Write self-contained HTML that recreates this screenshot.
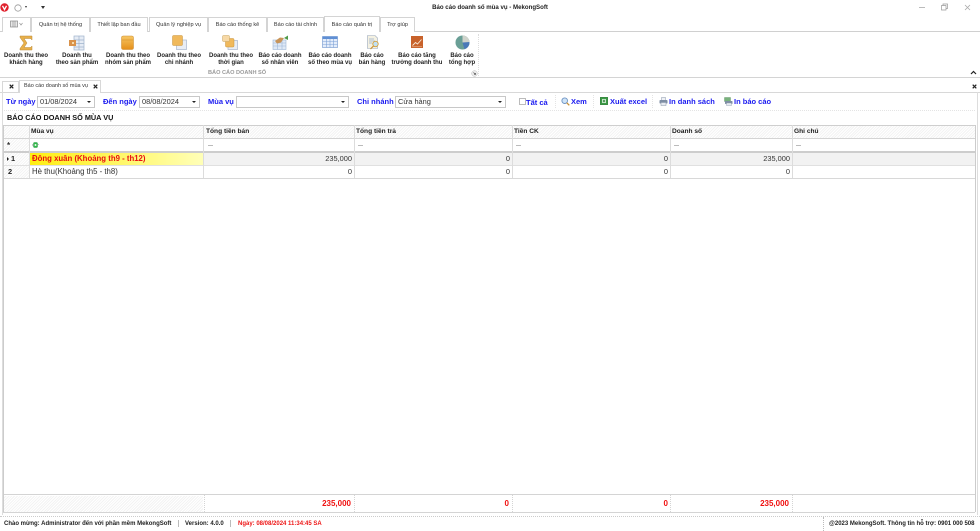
<!DOCTYPE html>
<html><head><meta charset="utf-8"><title>Báo cáo doanh số mùa vụ - MekongSoft</title>
<style>
html,body{margin:0;padding:0;background:#fff}
body{width:980px;height:531px;position:relative;overflow:hidden;font:6.6px "Liberation Sans","Noto Sans CJK JP",sans-serif;color:#222}
div,span,svg{position:absolute;box-sizing:border-box}
.tab{top:17px;height:15px;background:#fff;border:1px solid #d4d4d4;border-bottom:0;text-align:center;line-height:15px;font-size:5.6px;color:#333;white-space:nowrap}
.rb{top:53px;width:70px;text-align:center;font-weight:bold;font-size:6px;line-height:7.2px;color:#222;white-space:nowrap}
.lb{top:97px;font-weight:bold;font-size:7.5px;line-height:10px;color:#1a1af0;white-space:nowrap}
.ip{top:96px;height:12px;background:#fff;border:1px solid #c8c8c8;font-size:7.4px;line-height:10px;padding-left:2px;color:#333;white-space:nowrap}
.ar{width:0;height:0;border-left:2px solid transparent;border-right:2px solid transparent;border-top:2.5px solid #222;top:4px;right:3px}
.h{top:126px;height:12px;font-weight:bold;font-size:6.6px;line-height:12px;padding-left:2px;color:#222;white-space:nowrap}
.vl{width:1px;background:#dcdcdc}
.hl{height:1px;background:#d8d8d8}
.eq{top:145px;width:5px;height:2px;border-top:1px solid #bbb;border-bottom:0}
.n{font-size:7.4px;line-height:12px;text-align:right;color:#333;white-space:nowrap}
.f{top:498px;font-size:8px;font-weight:bold;color:#f01010;text-align:right;line-height:11px;white-space:nowrap}
.s{top:519px;font-size:6px;font-weight:bold;line-height:10px;white-space:nowrap;color:#222}
.hatch{background:repeating-linear-gradient(135deg,#fff 0,#fff 1px,#f3f3f3 1px,#f3f3f3 2px)}
</style></head><body>

<!-- title bar -->
<svg style="left:0;top:3px" width="9" height="9" viewBox="0 0 9 9"><circle cx="4.5" cy="4.5" r="4.2" fill="#e0202c"/><path d="M2.5 2.8L4.5 6.6 6.5 2.8" stroke="#fff" stroke-width="1.3" fill="none"/></svg>
<svg style="left:14px;top:4px" width="8" height="8" viewBox="0 0 8 8"><circle cx="4" cy="4" r="3.2" fill="#fff" stroke="#999" stroke-width=".8"/></svg>
<div style="left:25px;top:6px;width:0;height:0;border-left:1.5px solid transparent;border-right:1.5px solid transparent;border-top:2px solid #333"></div>
<div style="left:41px;top:6px;width:0;height:0;border-left:2px solid transparent;border-right:2px solid transparent;border-top:3px solid #333"></div>
<div style="left:380px;top:3px;width:220px;text-align:center;font-weight:bold;font-size:6.1px;line-height:10px;color:#222;white-space:nowrap">Báo cáo doanh số mùa vụ - MekongSoft</div>
<svg style="left:915px;top:3px" width="60" height="9" viewBox="0 0 60 9"><path d="M4 4.5H10" stroke="#aaa" stroke-width=".8"/><path d="M26.5 2.5h4.5v4.5h-4.5zM28 2.5V1h4.5v4.5H31" stroke="#999" stroke-width=".7" fill="none"/><path d="M50 2l5 5M55 2l-5 5" stroke="#aaa" stroke-width=".8"/></svg>

<!-- ribbon tabs -->
<div class="hl" style="left:0;top:31px;width:980px;background:#d0d0d0"></div>
<div class="tab" style="left:2px;width:29px"></div>
<svg style="left:10px;top:20px" width="14" height="8" viewBox="0 0 14 8"><rect x=".5" y="1" width="7" height="6" fill="#e8e8e8" stroke="#888" stroke-width=".7"/><path d="M3 1v6M5 1v6" stroke="#888" stroke-width=".6"/><path d="M9.5 3l1.5 2 1.5-2" stroke="#999" stroke-width=".7" fill="none"/></svg>
<div class="tab" style="left:31px;width:59px">Quản trị hệ thống</div>
<div class="tab" style="left:90px;width:58px">Thiết lập ban đầu</div>
<div class="tab" style="left:149px;width:59px">Quản lý nghiệp vụ</div>
<div class="tab" style="left:208px;width:59px">Báo cáo thống kê</div>
<div class="tab" style="left:267px;width:57px">Báo cáo tài chính</div>
<div class="tab" style="left:324px;width:56px;top:16px;height:16px;line-height:16px;z-index:2">Báo cáo quản trị</div>
<div class="tab" style="left:380px;width:35px">Trợ giúp</div>

<!-- ribbon icons -->
<svg style="left:18px;top:35px" width="16" height="16" viewBox="0 0 16 16"><path d="M2 1H14V5L12.5 3.5H6L9 8 6 12.5H12.5L14 11V15H2V13.5L6 8 2 2.5Z" fill="#e8b04a" stroke="#b98a3a" stroke-width=".5"/></svg>
<svg style="left:68px;top:35px" width="17" height="16" viewBox="0 0 17 16"><rect x="6" y="1" width="10" height="14" fill="#e6ecf5" stroke="#9fb2cc" stroke-width=".7"/><path d="M6 5H16M6 8.5H16M6 12H16M11 1V15" stroke="#9fb2cc" stroke-width=".7"/><rect x="1" y="5" width="7" height="6" fill="#d9924a"/><rect x="4" y="7" width="2" height="2" fill="#f6dcae"/></svg>
<svg style="left:121px;top:35px" width="13" height="15" viewBox="0 0 13 15"><defs><linearGradient id="g1" x1="0" y1="0" x2="0" y2="1"><stop offset="0" stop-color="#f7c765"/><stop offset="1" stop-color="#e58f1a"/></linearGradient></defs><rect x=".5" y="1" width="12" height="13.5" rx="1.5" fill="url(#g1)" stroke="#c98a30" stroke-width=".5"/><path d="M1 5H12" stroke="#d7922c" stroke-width=".6"/></svg>
<svg style="left:172px;top:35px" width="15" height="15" viewBox="0 0 15 15"><rect x="4.500" y="5" width="10" height="9.500" fill="#e8edf5" stroke="#a8b6cc" stroke-width=".7"/><rect x=".5" y=".5" width="10" height="10" rx="1" fill="#f0b95c" stroke="#c9953e" stroke-width=".5"/></svg>
<svg style="left:222px;top:35px" width="16" height="15" viewBox="0 0 16 15"><rect x="6" y="5.500" width="9.500" height="9" fill="#e8edf5" stroke="#a8b6cc" stroke-width=".7"/><rect x="3.500" y="3.500" width="8.500" height="8.500" rx="1" fill="#f0b95c" stroke="#c9953e" stroke-width=".5"/><rect x=".5" y=".5" width="7" height="6" rx="1" fill="#f7d9a6" stroke="#c9a45e" stroke-width=".5"/></svg>
<svg style="left:272px;top:35px" width="17" height="15" viewBox="0 0 17 15"><rect x="1" y="5" width="13" height="9.500" fill="#dfe9f6" stroke="#9db6d6" stroke-width=".6"/><path d="M1 8H14M1 11H14M5.500 5V14.500M10 5V14.500" stroke="#9db6d6" stroke-width=".6"/><path d="M3 6L8 2.500 12 3 9 7.500 5 8.500Z" fill="#c89458"/><path d="M12 3L16 .5V5Z" fill="#4f9a4a"/></svg>
<svg style="left:322px;top:36px" width="16" height="12" viewBox="0 0 16 12"><rect x=".5" y=".5" width="15" height="11" fill="#e3ecfa" stroke="#6d93cc" stroke-width=".6"/><rect x=".5" y=".5" width="15" height="2.500" fill="#5f8fd4"/><path d="M.5 5.500H15.500M.5 8.500H15.500M4.500 3V11.500M8 3V11.500M11.500 3V11.500" stroke="#7ea2d8" stroke-width=".6"/></svg>
<svg style="left:366px;top:35px" width="15" height="15" viewBox="0 0 15 15"><path d="M1.500 .5H9L11.500 3V13.500H1.500Z" fill="#f4f1e2" stroke="#9ba9bd" stroke-width=".6"/><path d="M3 4H8M3 6H9M3 8H6" stroke="#6c8cc0" stroke-width=".6"/><circle cx="9.500" cy="9" r="2.700" fill="#bfe0f5" stroke="#d8a13b" stroke-width=".9"/><path d="M7.500 11L4.500 14" stroke="#c98f32" stroke-width="1.200"/></svg>
<svg style="left:411px;top:36px" width="12" height="12" viewBox="0 0 12 12"><rect width="12" height="12" fill="#c8622b"/><path d="M1.500 9.500L4.500 6.500 6.500 8 10.500 3.500" stroke="#f7e7d4" stroke-width=".9" fill="none"/><path d="M1 10.800H11" stroke="#f0c9a8" stroke-width=".5"/></svg>
<svg style="left:455px;top:35px" width="15" height="15" viewBox="0 0 15 15"><circle cx="7.500" cy="7.500" r="7" fill="#6a9f96"/><path d="M7.500 7.500V.5A7 7 0 0 1 14.500 7.500Z" fill="#cfd3cb"/><path d="M7.500 7.500L14.500 7A7 7 0 0 1 9.500 14.200Z" fill="#4a79b8"/></svg>

<!-- ribbon labels -->
<div class="rb" style="left:-9px">Doanh thu theo<br>khách hàng</div>
<div class="rb" style="left:42px">Doanh thu<br>theo sản phẩm</div>
<div class="rb" style="left:93px">Doanh thu theo<br>nhóm sản phẩm</div>
<div class="rb" style="left:144px">Doanh thu theo<br>chi nhánh</div>
<div class="rb" style="left:196px">Doanh thu theo<br>thời gian</div>
<div class="rb" style="left:245px">Báo cáo doanh<br>số nhân viên</div>
<div class="rb" style="left:295px">Báo cáo doanh<br>số theo mùa vụ</div>
<div class="rb" style="left:337px">Báo cáo<br>bán hàng</div>
<div class="rb" style="left:382px">Báo cáo tăng<br>trưởng doanh thu</div>
<div class="rb" style="left:427px">Báo cáo<br>tổng hợp</div>
<div style="left:208px;top:70px;font-size:5.600px;font-weight:bold;color:#9a9a9a;line-height:7px;white-space:nowrap">BÁO CÁO DOANH SỐ</div>
<div style="left:478px;top:34px;width:1px;height:42px;border-left:1px dotted #ddd"></div>
<svg style="left:471px;top:70px" width="7" height="7" viewBox="0 0 7 7"><circle cx="3.500" cy="3.500" r="2.800" fill="#eee" stroke="#bbb" stroke-width=".5"/><path d="M2.500 2.500L4.500 4.500M4.500 3V4.500H3" stroke="#444" stroke-width=".6" fill="none"/></svg>
<svg style="left:970px;top:70px" width="7" height="5" viewBox="0 0 7 5"><path d="M1 4L3.500 1.500 6 4" stroke="#222" stroke-width="1.200" fill="none"/></svg>
<div class="hl" style="left:0;top:77px;width:980px;background:#d4d4d4"></div>

<!-- document tabs -->
<div class="hl" style="left:0;top:92px;width:980px;background:#d8d8d8"></div>
<div style="left:2px;top:81px;width:17px;height:11px;border:1px solid #d8d8d8;border-bottom:0;background:#fff"></div>
<div style="left:19px;top:80px;width:82px;height:13px;border:1px solid #d8d8d8;border-bottom:0;background:#fff;z-index:2"></div>
<div style="left:24px;top:82px;font-size:5.500px;line-height:9px;color:#333;white-space:nowrap;z-index:3">Báo cáo doanh số mùa vụ</div>
<svg style="left:9px;top:84px" width="5" height="5" viewBox="0 0 5 5"><path d="M.7.7L4.300 4.300M4.300.7L.7 4.300" stroke="#222" stroke-width="1.200"/></svg>
<svg style="left:93px;top:84px;z-index:3" width="5" height="5" viewBox="0 0 5 5"><path d="M.7.7L4.300 4.300M4.300.7L.7 4.300" stroke="#222" stroke-width="1.200"/></svg>
<svg style="left:972px;top:84px" width="5" height="5" viewBox="0 0 5 5"><path d="M.7.7L4.300 4.300M4.300.7L.7 4.300" stroke="#222" stroke-width="1.200"/></svg>

<!-- frame -->
<div style="left:2px;top:92px;width:1px;height:423px;background:#ddd"></div>
<div style="left:977px;top:92px;width:1px;height:423px;background:#ddd"></div>

<!-- filter bar -->
<div class="lb" style="left:6px">Từ ngày</div>
<div class="ip" style="left:37px;width:58px">01/08/2024<i class="ar" style="position:absolute"></i></div>
<div class="lb" style="left:103px">Đến ngày</div>
<div class="ip" style="left:139px;width:61px">08/08/2024<i class="ar" style="position:absolute"></i></div>
<div class="lb" style="left:208px">Mùa vụ</div>
<div class="ip" style="left:236px;width:113px"><i class="ar" style="position:absolute"></i></div>
<div class="lb" style="left:357px">Chi nhánh</div>
<div class="ip" style="left:395px;width:111px">Cửa hàng<i class="ar" style="position:absolute"></i></div>
<div style="left:519px;top:98px;width:7px;height:7px;border:1px solid #bbb;background:#fff"></div>
<div class="lb" style="left:526px;top:98px">Tất cả</div>
<svg style="left:561px;top:97px" width="9" height="9" viewBox="0 0 9 9"><circle cx="3.700" cy="3.700" r="2.800" fill="#cfe4f7" stroke="#6d93c4" stroke-width=".9"/><path d="M5.800 5.800L8.300 8.300" stroke="#c98f32" stroke-width="1.300"/></svg>
<div class="lb" style="left:571px">Xem</div>
<svg style="left:600px;top:97px" width="8" height="8" viewBox="0 0 8 8"><rect x=".3" y=".3" width="7.400" height="7.400" fill="#3c9a45" stroke="#2a7a34" stroke-width=".5"/><rect x="2" y="2" width="4" height="4" fill="#d7efd9"/><path d="M2.800 2.800L5.200 5.200M5.200 2.800L2.800 5.200" stroke="#2a7a34" stroke-width=".7"/></svg>
<div class="lb" style="left:610px">Xuất excel</div>
<svg style="left:659px;top:97px" width="9" height="9" viewBox="0 0 9 9"><rect x="2.500" y=".5" width="4" height="3" fill="#eef1f6" stroke="#8896aa" stroke-width=".5"/><rect x=".5" y="3" width="8" height="3.500" rx=".8" fill="#7e8ea4"/><rect x="2" y="5.500" width="5" height="3" fill="#e7ebf1" stroke="#8896aa" stroke-width=".5"/></svg>
<div class="lb" style="left:669px">In danh sách</div>
<svg style="left:724px;top:97px" width="9" height="9" viewBox="0 0 9 9"><rect x=".5" y=".5" width="6" height="4" fill="#78b27c" stroke="#5d8f62" stroke-width=".4"/><rect x="1" y="4" width="7.500" height="3" rx=".6" fill="#7e8ea4"/><rect x="2.500" y="6" width="5" height="2.500" fill="#e7ebf1" stroke="#8896aa" stroke-width=".4"/></svg>
<div class="lb" style="left:734px">In báo cáo</div>
<div style="left:4px;top:110px;width:971px;height:1px;border-top:1px dotted #e4e4e4"></div>
<div style="left:555px;top:95px;width:1px;height:13px;border-left:1px dotted #e4e4e4"></div>
<div style="left:593px;top:95px;width:1px;height:13px;border-left:1px dotted #e4e4e4"></div>
<div style="left:652px;top:95px;width:1px;height:13px;border-left:1px dotted #e4e4e4"></div>

<div style="left:7px;top:113px;font-weight:bold;font-size:7.300px;line-height:10px;color:#111;white-space:nowrap">BÁO CÁO DOANH SỐ MÙA VỤ</div>

<!-- grid backgrounds -->
<div class="hatch" style="left:4px;top:126px;width:971px;height:12px"></div>
<div class="hatch" style="left:4px;top:139px;width:25px;height:39px"></div>
<div style="left:29px;top:152px;width:174px;height:13px;background:linear-gradient(90deg,#ffee10,#ffffb8)"></div>
<div style="left:203px;top:152px;width:772px;height:13px;background:#f2f2f2"></div>
<div style="left:4px;top:496px;width:199px;height:16px" class="hatch"></div>

<!-- grid lines -->
<div class="hl" style="left:3px;top:125px;width:972px;background:#cfcfcf"></div>
<div class="hl" style="left:3px;top:138px;width:972px;background:#d4d4d4"></div>
<div class="hl" style="left:3px;top:151px;width:972px;height:2px;background:#cdcdcd"></div>
<div class="hl" style="left:3px;top:165px;width:972px;background:#e0e0e0"></div>
<div class="hl" style="left:3px;top:178px;width:972px;background:#d8d8d8"></div>
<div class="hl" style="left:3px;top:494px;width:972px;background:#d4d4d4"></div>
<div class="hl" style="left:3px;top:512px;width:972px;background:#d4d4d4"></div>
<div class="vl" style="left:3px;top:125px;height:387px;background:#ccc"></div>
<div class="vl" style="left:975px;top:125px;height:387px;background:#ccc"></div>
<div class="vl" style="left:29px;top:125px;height:53px"></div>
<div class="vl" style="left:203px;top:125px;height:53px"></div>
<div class="vl" style="left:354px;top:125px;height:53px"></div>
<div class="vl" style="left:512px;top:125px;height:53px"></div>
<div class="vl" style="left:670px;top:125px;height:53px"></div>
<div class="vl" style="left:792px;top:125px;height:53px"></div>
<div style="left:204px;top:495px;width:1px;height:17px;border-left:1px dotted #d4d4d4"></div>
<div style="left:354px;top:495px;width:1px;height:17px;border-left:1px dotted #d4d4d4"></div>
<div style="left:512px;top:495px;width:1px;height:17px;border-left:1px dotted #d4d4d4"></div>
<div style="left:670px;top:495px;width:1px;height:17px;border-left:1px dotted #d4d4d4"></div>
<div style="left:792px;top:495px;width:1px;height:17px;border-left:1px dotted #d4d4d4"></div>

<!-- headers -->
<div class="h" style="left:29px">Mùa vụ</div>
<div class="h" style="left:204px">Tổng tiền bán</div>
<div class="h" style="left:354px">Tổng tiền trả</div>
<div class="h" style="left:512px">Tiền CK</div>
<div class="h" style="left:670px">Doanh số</div>
<div class="h" style="left:792px">Ghi chú</div>

<!-- filter row -->
<div style="left:7px;top:141px;font-weight:bold;font-size:8px;line-height:10px;color:#333">*</div>
<svg style="left:32px;top:142px" width="7" height="6" viewBox="0 0 7 6"><rect x="1.500" y=".5" width="4" height="5" rx=".8" fill="#2fb84a" stroke="#1c8a32" stroke-width=".4"/><circle cx="3.500" cy="3" r="1" fill="#eaffea"/><path d="M0 2.500H1.200M0 3.800H1.200M5.800 2.500H7" stroke="#888" stroke-width=".5"/></svg>
<div class="eq" style="left:208px"></div>
<div class="eq" style="left:358px"></div>
<div class="eq" style="left:516px"></div>
<div class="eq" style="left:674px"></div>
<div class="eq" style="left:796px"></div>

<!-- rows -->
<div style="left:7px;top:157px;width:0;height:0;border-top:2px solid transparent;border-bottom:2px solid transparent;border-left:2.500px solid #222"></div>
<div style="left:11px;top:153px;font-weight:bold;font-size:7.400px;line-height:12px;color:#222">1</div>
<div style="left:8px;top:166px;font-weight:bold;font-size:7.400px;line-height:12px;color:#222">2</div>
<div style="left:32px;top:153px;font-weight:bold;font-size:7.800px;line-height:12px;color:#e81010;white-space:nowrap">Đông xuân (Khoảng th9 - th12)</div>
<div style="left:32px;top:166px;font-size:7.800px;line-height:12px;color:#333;white-space:nowrap">Hè thu(Khoảng th5 - th8)</div>
<div class="n" style="left:280px;width:72px;top:153px">235,000</div>
<div class="n" style="left:280px;width:72px;top:166px">0</div>
<div class="n" style="left:440px;width:70px;top:153px">0</div>
<div class="n" style="left:440px;width:70px;top:166px">0</div>
<div class="n" style="left:598px;width:70px;top:153px">0</div>
<div class="n" style="left:598px;width:70px;top:166px">0</div>
<div class="n" style="left:720px;width:70px;top:153px">235,000</div>
<div class="n" style="left:720px;width:70px;top:166px">0</div>

<!-- footer totals -->
<div class="f" style="left:279px;width:72px">235,000</div>
<div class="f" style="left:440px;width:69px">0</div>
<div class="f" style="left:598px;width:70px">0</div>
<div class="f" style="left:718px;width:71px">235,000</div>

<!-- status bar -->
<div class="hl" style="left:0;top:516px;width:980px;background:none;border-top:1px dotted #ccc"></div>
<div class="s" style="left:4px">Chào mừng: Administrator đến với phần mềm MekongSoft</div>
<div style="left:178px;top:520px;width:1px;height:7px;background:#bbb"></div>
<div class="s" style="left:185px">Version: 4.0.0</div>
<div style="left:230px;top:520px;width:1px;height:7px;background:#bbb"></div>
<div class="s" style="left:238px;color:#ee1515">Ngày: 08/08/2024 11:34:45 SA</div>
<div style="left:823px;top:517px;width:1px;height:14px;border-left:1px dotted #bbb"></div>
<div class="s" style="left:829px">@2023 MekongSoft. Thông tin hỗ trợ: 0901 000 508</div>
</body></html>
